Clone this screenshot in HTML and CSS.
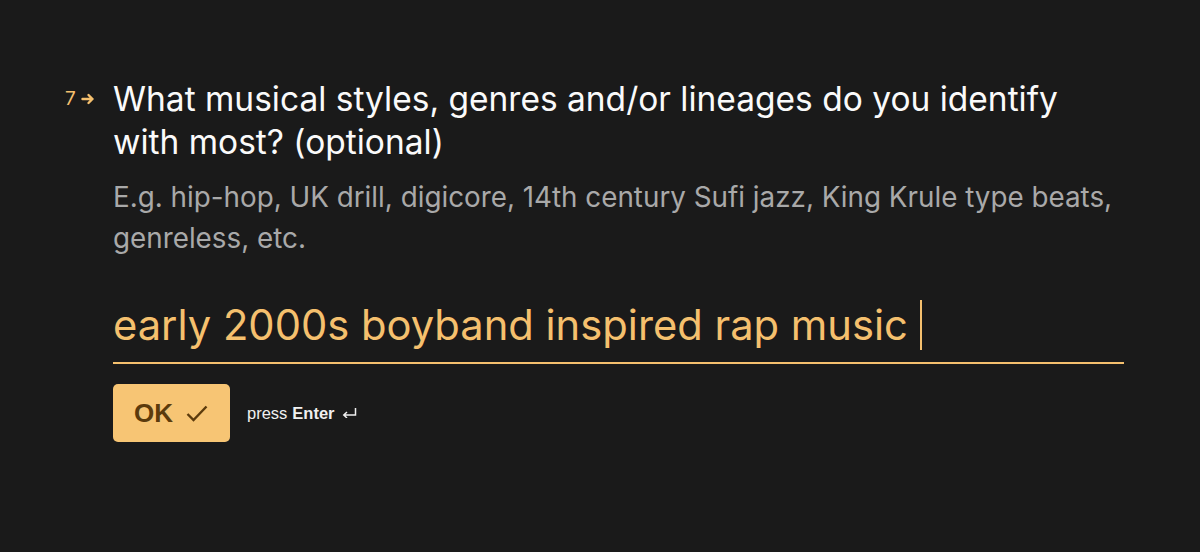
FILE: index.html
```html
<!DOCTYPE html>
<html>
<head>
<meta charset="utf-8">
<link rel="stylesheet" href="styles.css">
</head>
<body>
<main class="page">
  <section class="question">
    <div class="counter">
      <span class="num">7</span>
      <svg class="arrow" width="14" height="12" viewBox="0 0 14 12"><path d="M1.5 6h10M7.5 2L11.5 6 7.5 10" fill="none" stroke="currentColor" stroke-width="2.4" stroke-linecap="round" stroke-linejoin="round"/></svg>
    </div>
    <div class="body">
      <h1 class="title">What musical styles, genres and/or lineages do you identify with most? (optional)</h1>
      <p class="desc">E.g. hip-hop, UK drill, digicore, 14th century Sufi jazz, King Krule type beats, genreless, etc.</p>
      <div class="field">
        <span class="value">early 2000s boyband inspired rap music</span><span class="caret"></span>
      </div>
      <div class="actions">
        <button class="ok">OK <svg class="check" width="22" height="17" viewBox="0 0 22 17"><path d="M1.5 9l6 6L20.5 1.5" fill="none" stroke="currentColor" stroke-width="2.4"/></svg></button>
        <span class="hint">press <b>Enter</b> <svg class="enter" width="15" height="10" viewBox="0 0 15 10"><path d="M13.5 0v7H2M5 4L1.8 7 5 10" fill="none" stroke="currentColor" stroke-width="1.5"/></svg></span>
      </div>
    </div>
  </section>
</main>
</body>
</html>
```
FILE: styles.css
```css
html, body {
  margin: 0;
  background: #1a1a1a;
  height: 100%;
}
body {
  font-family: Inter, "Noto Sans", sans-serif;
  color: #fff;
}
.page {
  padding: 78px 76px 0 58px;
}
.question {
  display: flex;
  align-items: flex-start;
}
.counter {
  display: flex;
  align-items: center;
  gap: 5px;
  width: 55px;
  color: #f5c06e;
  padding-top: 11px;
  padding-left: 7px;
  box-sizing: border-box;
}
.num {
  font-size: 19px;
  line-height: 20px;
}
.arrow {
  display: block;
}
.body {
  flex: 1;
}
.title {
  margin: 0;
  font-weight: 400;
  font-size: 33.5px;
  line-height: 43px;
  color: #fafafa;
}
.desc {
  margin: 13px 0 0;
  font-size: 27.8px;
  line-height: 41px;
  color: #a9a9a9;
}
.field {
  margin-top: 33px;
  display: flex;
  align-items: center;
  border-bottom: 2px solid #f5c06e;
  height: 72px;
  padding-bottom: 4px;
  box-sizing: border-box;
}
.value {
  font-size: 41.7px;
  color: #f5c06e;
}
.caret {
  display: inline-block;
  width: 2px;
  height: 50px;
  margin-left: 12px;
  background: #f5c06e;
}
.actions {
  display: flex;
  align-items: center;
  margin-top: 20px;
}
.ok {
  display: flex;
  align-items: center;
  gap: 13px;
  width: 117px;
  height: 58px;
  padding: 0 0 0 21px;
  border: 0;
  border-radius: 5px;
  background: #f7c574;
  color: #5c3b0c;
  font-family: "Liberation Sans", Arial, sans-serif;
  font-weight: 700;
  font-size: 26px;
}
.check {
  display: block;
}
.hint {
  display: flex;
  align-items: center;
  gap: 5px;
  margin-left: 17px;
  font-family: "Liberation Sans", Arial, sans-serif;
  font-size: 16.5px;
  color: #f0f0f0;
}
.hint b {
  font-weight: 700;
}
.enter {
  display: block;
  margin-left: 2px;
}
```
